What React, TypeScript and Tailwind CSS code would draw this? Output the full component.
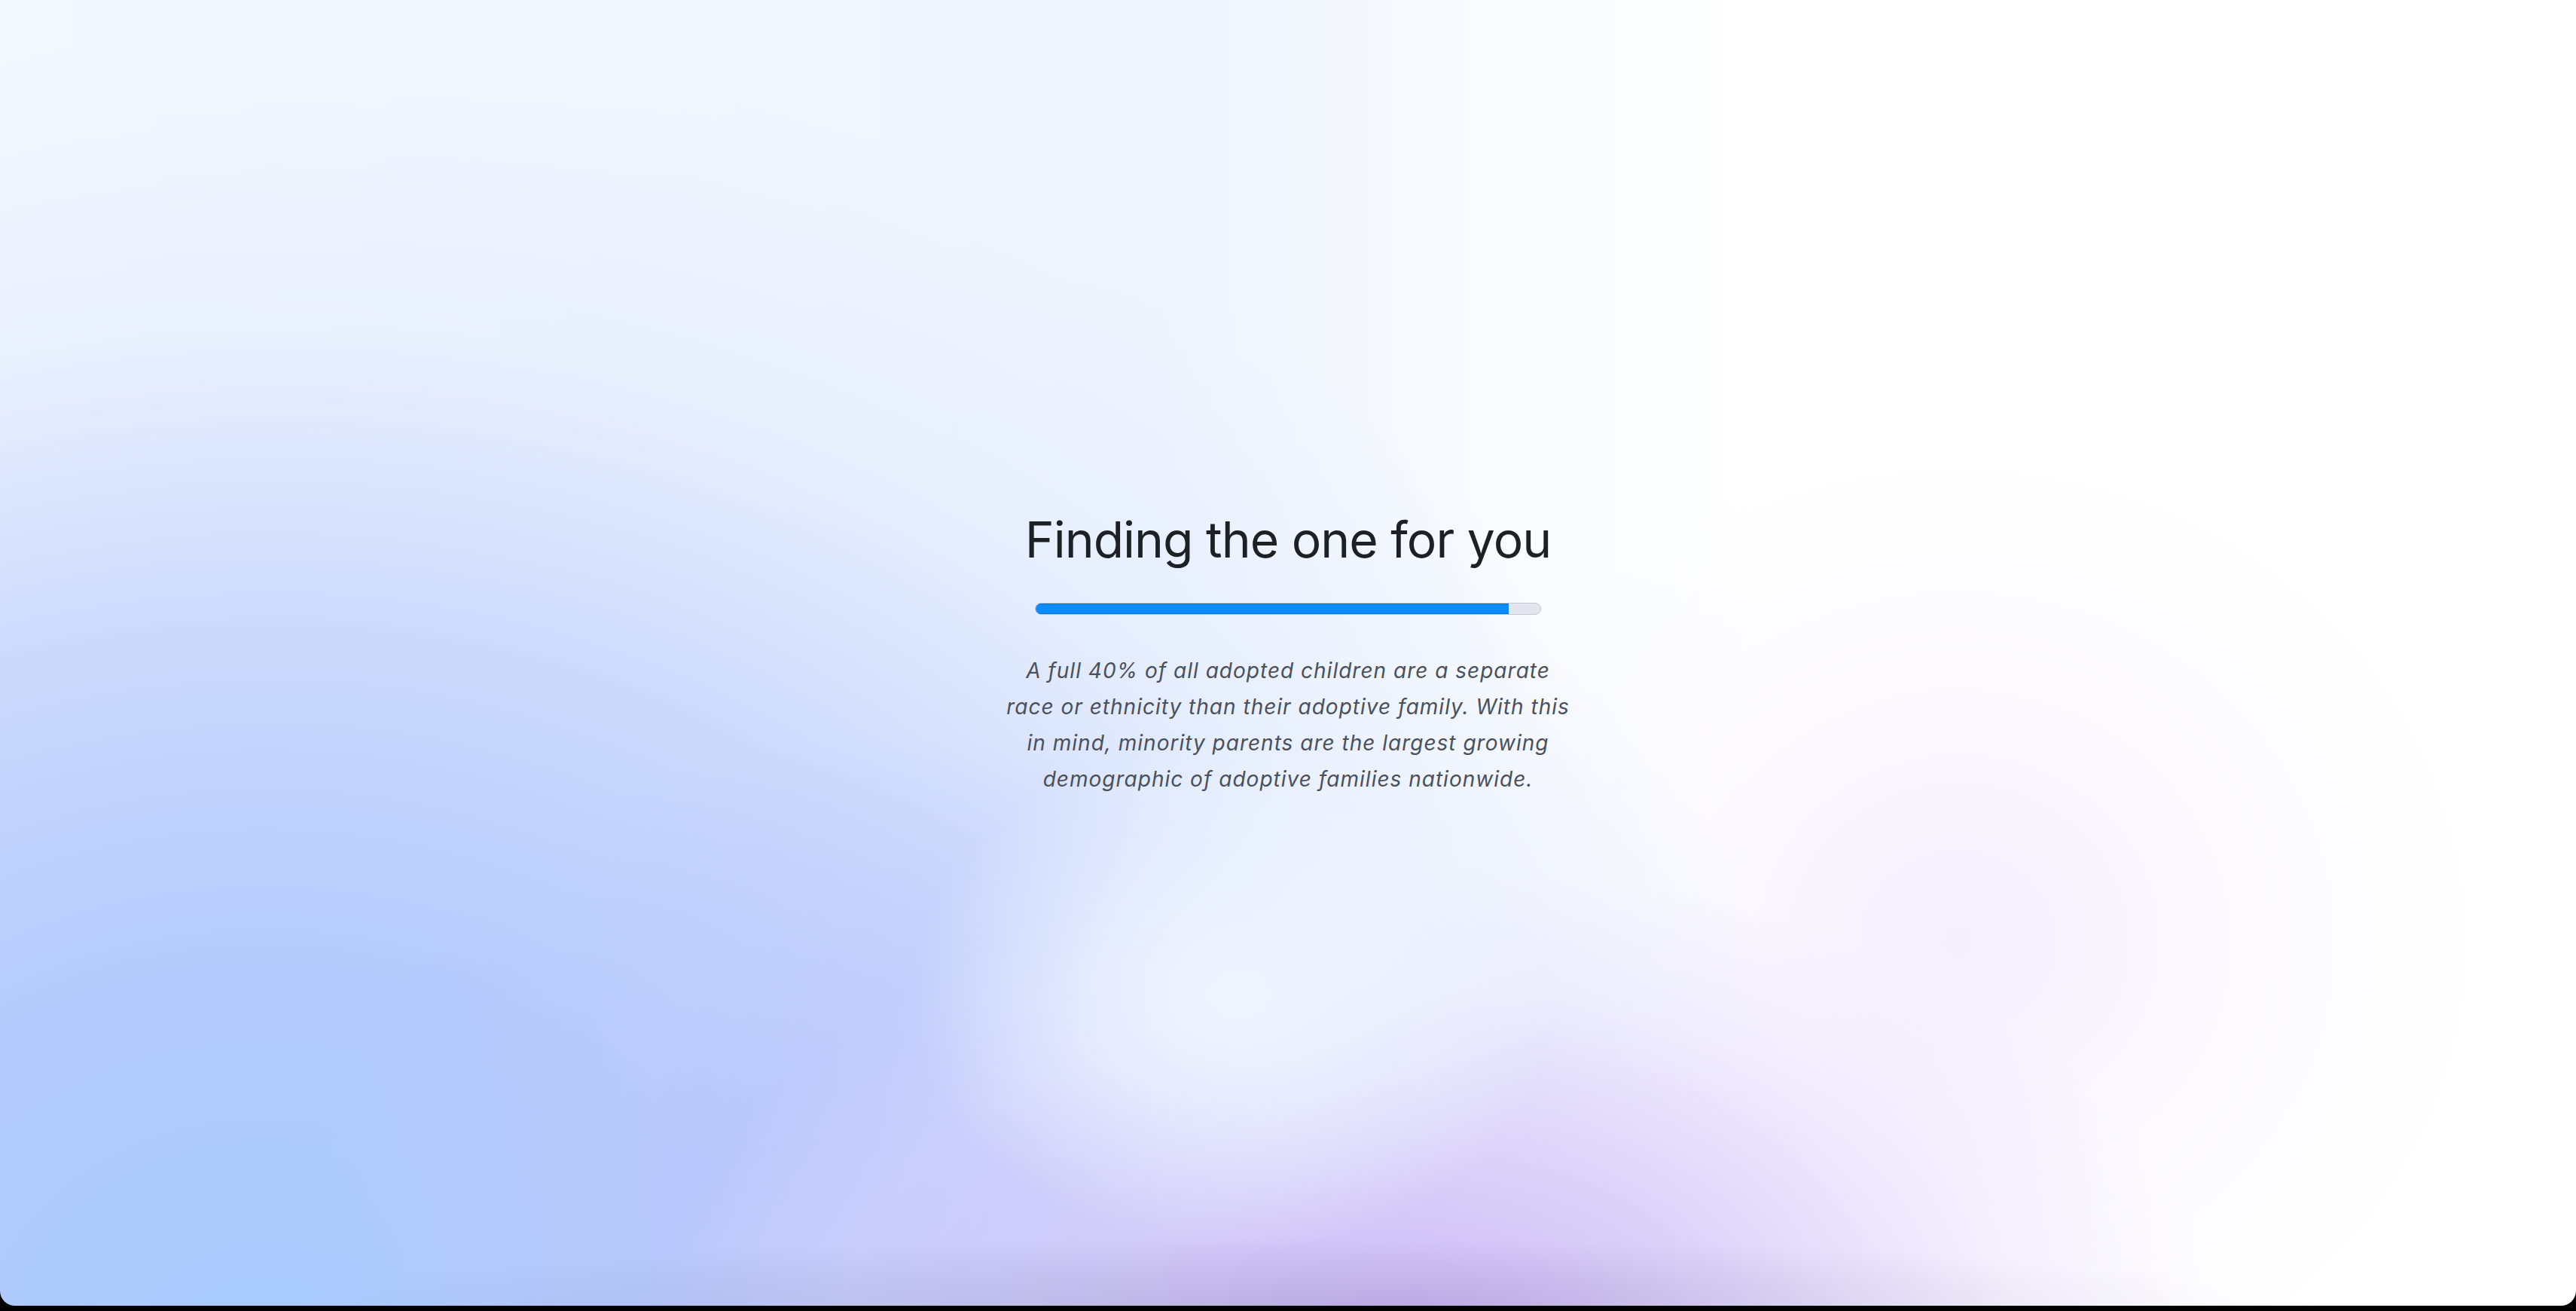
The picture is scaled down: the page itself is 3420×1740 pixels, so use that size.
import React from "react";

export default function App() {
  return (
    <div className="flex h-screen w-full flex-col bg-black">
      <div className="relative flex flex-1 items-center justify-center overflow-hidden rounded-b-[20px] bg-[radial-gradient(ellipse_430px_340px_at_1640px_1320px,rgba(240,246,255,1)_0%,rgba(240,246,255,0.65)_45%,rgba(240,246,255,0)_100%),radial-gradient(ellipse_1050px_640px_at_1900px_1790px,#cbb7f5_0%,rgba(214,200,248,0.75)_40%,rgba(230,222,251,0.35)_75%,rgba(230,222,251,0)_100%),radial-gradient(ellipse_760px_640px_at_1180px_1620px,rgba(184,194,251,0.9)_0%,rgba(190,200,251,0.5)_50%,rgba(190,200,251,0)_100%),radial-gradient(ellipse_2100px_1750px_at_350px_1800px,#a8cbfe_0%,#b4cbfc_30%,rgba(200,214,252,0.9)_55%,rgba(226,235,253,0.6)_78%,rgba(236,243,254,0)_100%),radial-gradient(ellipse_700px_650px_at_2600px_1250px,rgba(242,236,253,0.8)_0%,rgba(246,242,254,0.4)_55%,rgba(246,242,254,0)_100%),linear-gradient(to_right,#f4f8ff_0%,#eff5fe_45%,#ffffff_68%)] pt-[8px] font-['Inter',sans-serif]">
        <div className="pointer-events-none absolute bottom-0 left-[380px] right-[380px] h-[90px] bg-[radial-gradient(ellipse_50%_100%_at_50%_100%,rgba(20,20,60,0.11),rgba(20,20,60,0)_100%)]" />
        <div className="relative flex flex-col items-center">
          <h1 className="text-[66px] leading-[66px] font-normal text-[#1d2126] tracking-[-1px]">
            Finding the one for you
          </h1>
          <div className="mt-[51px] h-[16px] w-[672px] overflow-hidden rounded-full border border-[#c3c8d3] bg-[#e3e6ee]">
            <div className="h-full w-[93.75%] bg-[#0a8cff] shadow-[inset_0_1px_0_#0070d6,inset_0_-1px_0_#0078e0]" />
          </div>
          <p className="mt-[50px] w-[762px] text-center text-[28px] leading-[48px] italic tracking-[1px] text-[#4a505c]">
            A full 40% of all adopted children are a separate race or ethnicity than their adoptive family. With this in mind, minority parents are the largest growing demographic of adoptive families nationwide.
          </p>
        </div>
      </div>
      <div className="h-[7px] w-full bg-black" />
    </div>
  );
}
